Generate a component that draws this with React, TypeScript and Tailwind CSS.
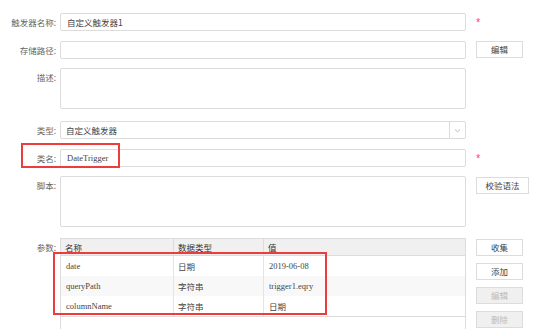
import React from 'react';

const cjk = { fontFamily: '"Noto Sans CJK SC", "Noto Sans", sans-serif' };
const serif = { fontFamily: '"Liberation Serif", "Noto Sans CJK SC", serif' };

const params = [
  { name: 'date', type: '日期', value: '2019-06-08' },
  { name: 'queryPath', type: '字符串', value: 'trigger1.eqry' },
  { name: 'columnName', type: '字符串', value: '日期' },
];

function Label({ text, top }: { text: string; top?: boolean }) {
  return (
    <div
      className={`w-[56px] shrink-0 text-right text-[8.5px] text-[#666] ${top ? 'pt-[3px]' : 'leading-[18px]'}`}
      style={cjk}
    >
      {text}
    </div>
  );
}

function Btn({ text, disabled, w = 'w-[47px]' }: { text: string; disabled?: boolean; w?: string }) {
  return (
    <div
      className={`${w} h-[17px] border border-[#dcdcdc] text-center text-[8.5px] leading-[15px] ${
        disabled ? 'bg-[#f0f0f0] text-[#bbb]' : 'bg-white text-[#444]'
      }`}
      style={cjk}
    >
      {text}
    </div>
  );
}

function Star() {
  return <span className="ml-[6px] mt-[3px] text-[8px] leading-[12px] text-[#f44]">*</span>;
}

export default function App() {
  return (
    <div className="relative w-[543px] h-[329px] overflow-hidden bg-white pt-[13px]">
      <div className="flex flex-col">
        {/* 触发器名称 */}
        <div className="flex items-start gap-[4px]">
          <Label text="触发器名称:" />
          <div className="w-[406px] h-[18px] border border-[#dcdcdc] rounded-[2px] px-[6px] text-[8.5px] leading-[16px] text-[#444]" style={cjk}>
            自定义触发器1
          </div>
          <Star />
        </div>

        {/* 存储路径 */}
        <div className="flex items-start gap-[4px] mt-[10px]">
          <Label text="存储路径:" />
          <div className="w-[406px] h-[18px] border border-[#dcdcdc] rounded-[2px]" />
          <div className="ml-[6px]">
            <Btn text="编辑" />
          </div>
        </div>

        {/* 描述 */}
        <div className="flex items-start gap-[4px] mt-[9px]">
          <Label text="描述:" top />
          <div className="w-[406px] h-[41px] border border-[#dcdcdc] rounded-[2px]" />
        </div>

        {/* 类型 */}
        <div className="flex items-start gap-[4px] mt-[12px]">
          <Label text="类型:" />
          <div className="w-[406px] h-[18px] border border-[#dcdcdc] rounded-[2px] flex">
            <div className="flex-1 px-[5px] text-[8.5px] leading-[16px] text-[#444]" style={cjk}>
              自定义触发器
            </div>
            <div className="w-[16px] border-l border-[#dcdcdc] flex items-center justify-center">
              <svg width="7" height="5" viewBox="0 0 7 5">
                <path d="M1 1.5 L3.5 3.8 L6 1.5" fill="none" stroke="#aaa" strokeWidth="0.8" />
              </svg>
            </div>
          </div>
        </div>

        {/* 类名 */}
        <div className="flex items-start gap-[4px] mt-[10px]">
          <Label text="类名:" />
          <div className="w-[406px] h-[18px] border border-[#dcdcdc] rounded-[2px] px-[6px] text-[8.5px] leading-[16px] text-[#444]" style={serif}>
            DateTrigger
          </div>
          <Star />
        </div>

        {/* 脚本 */}
        <div className="flex items-start gap-[4px] mt-[9px]">
          <Label text="脚本:" top />
          <div className="w-[406px] h-[51px] border border-[#dcdcdc] rounded-[2px]" />
          <div className="ml-[6px] mt-[1px]">
            <Btn text="校验语法" w="w-[53px]" />
          </div>
        </div>

        {/* 参数 */}
        <div className="flex items-start gap-[4px] mt-[11px]">
          <Label text="参数:" top />
          <div className="w-[406px] h-[110px] border border-[#dcdcdc]">
            <div className="grid grid-cols-[113px_90px_1fr] h-[17px] bg-[#f0f0f0] border-b border-[#dcdcdc] text-[8.5px] leading-[17px] text-[#333]" style={cjk}>
              <div className="pl-[4px] border-r border-[#dcdcdc]">名称</div>
              <div className="pl-[4px] border-r border-[#dcdcdc]">数据类型</div>
              <div className="pl-[4px]">值</div>
            </div>
            <div className="border-b border-[#dcdcdc]">
              {params.map((p, idx) => (
                <div
                  key={p.name}
                  className={`grid grid-cols-[113px_90px_1fr] h-[20px] text-[8.5px] leading-[20px] text-[#444] ${
                    idx === 1 ? 'bg-[#f8f8f8]' : 'bg-white'
                  }`}
                >
                  <div className="pl-[5px] border-r border-[#e4e4e4]" style={serif}>{p.name}</div>
                  <div className="pl-[4px] border-r border-[#e4e4e4]" style={cjk}>{p.type}</div>
                  <div className="pl-[5px]" style={p.value === '日期' ? cjk : serif}>{p.value}</div>
                </div>
              ))}
            </div>
          </div>
          <div className="ml-[6px] mt-[1px] flex flex-col gap-[7px]">
            <Btn text="收集" />
            <Btn text="添加" />
            <Btn text="编辑" disabled />
            <Btn text="删除" disabled />
          </div>
        </div>
      </div>

      {/* highlight boxes */}
      <div className="absolute left-[21px] top-[143px] w-[99px] h-[25px] border-2 border-[#ee3b3b]" />
      <div className="absolute left-[53px] top-[252px] w-[274px] h-[63px] border-2 border-[#ee3b3b]" />
    </div>
  );
}
